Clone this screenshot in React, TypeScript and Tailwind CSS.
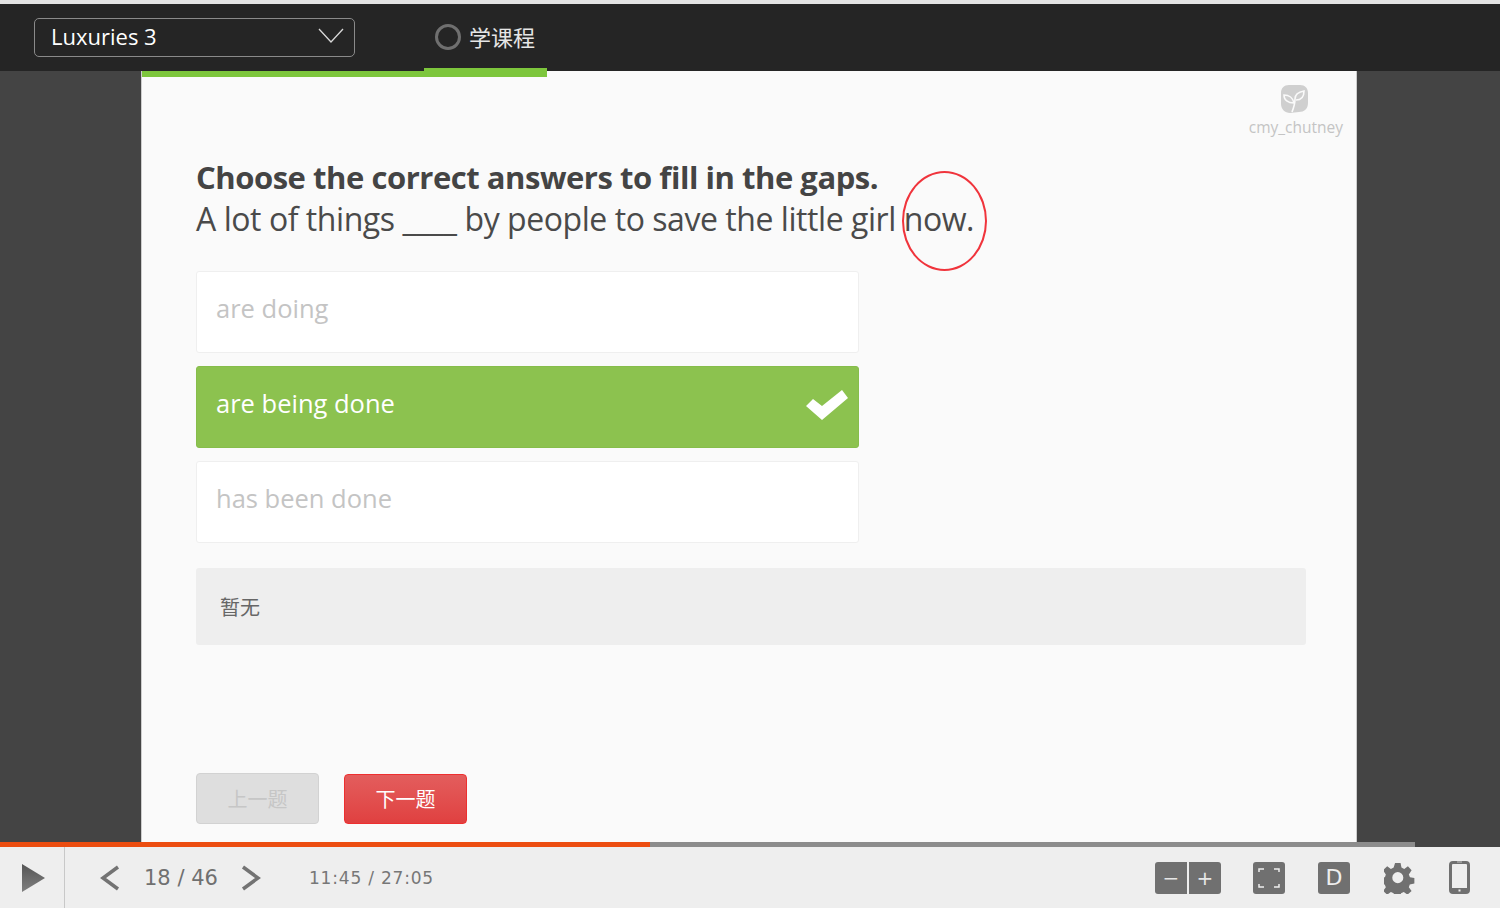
const font = { fontFamily: '"Open Sans", "Noto Sans CJK SC", sans-serif' };
const cjk = { fontFamily: '"Noto Sans CJK SC", sans-serif' };

function Sprout() {
  return (
    <svg width="29" height="29" viewBox="0 0 29 29">
      <path d="M9 1h11c5 0 8 3 8 8v10c0 6-4 9-9 9l-9 1c-5 0-9-4-9-9V9c0-5 3-8 8-8z" fill="#cfcfcf" />
      <path d="M12 28c2-5 3-9 3-13 0-4 3-7 9-8 0 6-3 9-8 9" fill="none" stroke="#fafafa" strokeWidth="1.6" />
      <path d="M14 19c-1-5-5-8-10-8 0 5 4 8 10 8z" fill="none" stroke="#fafafa" strokeWidth="1.6" />
    </svg>
  );
}

function Option({ text, selected }: { text: string; selected?: boolean }) {
  if (selected) {
    return (
      <div className="h-[82px] w-[663px] rounded-[3px] border border-[#86bd4b] bg-[#8cc24f] pl-[19px] pr-[9px] flex items-center justify-between text-white text-[25.5px]">
        <span className="-mt-2">{text}</span>
        <svg width="44" height="32" viewBox="0 0 44 32" className="-mt-[4px]">
          <path d="M1 17l7-7 9 7L37 1l6 8-26 22z" fill="#fff" />
        </svg>
      </div>
    );
  }
  return (
    <div className="h-[82px] w-[663px] rounded-[3px] border border-[#efefef] bg-white pl-[19px] flex items-center text-[25.5px] text-[#c4c4c4]">
      <span className="-mt-2">{text}</span>
    </div>
  );
}

export default function App() {
  return (
    <div className="relative h-[908px] w-[1500px] overflow-hidden bg-[#eeeeee] flex flex-col" style={font}>
      <div className="h-[4px] bg-[#e3e3e3] shrink-0" />

      {/* top bar */}
      <header className="relative h-[67px] shrink-0 bg-[#252525] flex items-center pl-[34px]">
        <div className="h-[39px] w-[321px] rounded-[5px] border border-[#8a8a8a] flex items-center justify-between pl-[16px] pr-[10px] text-white text-[22px]">
          <span className="-mt-[3px]">Luxuries 3</span>
          <svg width="26" height="16" viewBox="0 0 26 16" className="-mt-[4px]">
            <path d="M1 1l12 13L25 1" fill="none" stroke="#d8d8d8" strokeWidth="1.3" />
          </svg>
        </div>
        <div className="ml-[80px] flex items-center gap-[8px] text-[#e6e6e6] text-[22px] -mt-[1px]" style={cjk}>
          <span className="w-[26px] h-[26px] rounded-full border-[3px] border-[#6f6f6f]" />
          <span className="-mt-[2px]">学课程</span>
        </div>
        <div className="absolute left-[424px] top-[64px] h-[3px] w-[123px] bg-[#7dc63c]" />
      </header>

      {/* content */}
      <main className="flex-1 min-h-0 bg-[#444444] pl-[141px] pr-[143px]">
        <div className="relative h-full bg-[#fafafa] border-l border-r border-[#8a8a8a]/40 flex flex-col">
          <div className="h-[6px] w-[405px] bg-[#7dc63c] shrink-0" />

          <div className="absolute right-[13px] top-[13px] flex flex-col items-center gap-[4px] text-[#c4c4c4] text-[15.5px] leading-[20px]">
            <span className="-ml-[3px]"><Sprout /></span>
            <span>cmy_chutney</span>
          </div>

          <div className="pl-[54px] pr-[50px] pt-[80px] flex-1 flex flex-col">
            <h1 className="text-[#444444] text-[31px] leading-[41px] font-bold tracking-[-0.46px]">Choose the correct answers to fill in the gaps.</h1>
            <p className="text-[#4a4a4a] text-[32px] leading-[41px] tracking-[-0.45px]">A lot of things ____ by people to save the little girl now.</p>

            <div className="mt-[32px] flex flex-col gap-[13px]">
              <Option text="are doing" />
              <Option text="are being done" selected />
              <Option text="has been done" />
            </div>

            <div className="mt-[25px] h-[77px] rounded-[3px] bg-[#eeeeee] pl-[24px] flex items-center text-[#666666] text-[20px]" style={cjk}>
              暂无
            </div>

            <div className="mt-[128px] flex items-center gap-[25px] text-[20px]" style={cjk}>
              <button className="h-[51px] w-[123px] rounded-[4px] border border-[#d2d2d2] bg-[#dedede] text-[#c6c6c6]">上一题</button>
              <button className="h-[50px] w-[123px] rounded-[4px] border border-[#ee2f2f] bg-gradient-to-b from-[#e35d5d] to-[#e04040] text-white">下一题</button>
            </div>
          </div>

          {/* annotation */}
          <div className="absolute left-[760px] top-[100px] h-[100px] w-[85px] rounded-[50%] border-2 border-[#f0343c]" />
        </div>
      </main>

      {/* progress */}
      <div className="h-[5px] shrink-0 flex bg-[#444444]">
        <div className="w-[650px] bg-[#ec4d10]" />
        <div className="w-[765px] bg-[#8c8c8c]" />
      </div>

      {/* player controls */}
      <footer className="h-[61px] shrink-0 bg-[#eeeeee] flex items-center text-[#707070]" style={{ fontFamily: '"DejaVu Sans", sans-serif' }}>
        <div className="h-full w-[65px] shrink-0 border-r border-[#c8c8c8] flex items-center pl-[22px]">
          <svg width="23" height="28" viewBox="0 0 23 28">
            <defs>
              <linearGradient id="playFill" x1="0" y1="0" x2="0" y2="1">
                <stop offset="0" stopColor="#555555" />
                <stop offset="1" stopColor="#808080" />
              </linearGradient>
            </defs>
            <path d="M0 0l23 14L0 28z" fill="url(#playFill)" />
          </svg>
        </div>
        <svg width="22" height="26" viewBox="0 0 22 26" className="ml-[34px]"><path d="M19 2L4 13l15 11" fill="none" stroke="#737373" strokeWidth="3.5" /></svg>
        <span className="ml-[23px] mt-[3px] text-[21px] w-[76px]">18 / 46</span>
        <svg width="22" height="26" viewBox="0 0 22 26" className="ml-[20px]"><path d="M3 2l15 11L3 24" fill="none" stroke="#737373" strokeWidth="3.5" /></svg>
        <span className="ml-[47px] mt-[3px] text-[17px] tracking-[0.8px] text-[#777777]">11:45 / 27:05</span>

        <div className="ml-auto flex items-center pr-[30px]">
          <div className="h-[32px] w-[66px] rounded-[3px] bg-[#707070] flex items-center text-[#e6e6e6] text-[20px]">
            <span className="w-[32px] text-center">−</span>
            <span className="h-full w-[2px] bg-[#eeeeee]" />
            <span className="flex-1 text-center">+</span>
          </div>
          <div className="ml-[32px] h-[32px] w-[32px] rounded-[3px] bg-[#707070] flex items-center justify-center">
            <svg width="24" height="22" viewBox="0 0 24 22" fill="none" stroke="#eeeeee" strokeWidth="1.5">
              <path d="M2 5V2h5M17 2h5v3M22 17v3h-5M7 20H2v-3" />
            </svg>
          </div>
          <div className="ml-[33px] h-[32px] w-[32px] rounded-[3px] bg-[#707070] flex items-center justify-center text-[#eeeeee] text-[22px]">D</div>
          <svg width="32" height="32" viewBox="0 0 32 32" className="ml-[34px]">
            <path fillRule="evenodd" fill="#707070" d="M13 0h6l1 5 3 1.500 4-3 4 4.500-3 4.500 1.200 3 4.800 1v6l-5 1-1 3 3 4-4.500 4-4-3-3 1.500-1 5h-6l-1-5-3-1.500-4 3-4.500-4 3-4-1.200-3-4.800-1v-6l5-1 1-3-3-4.500 4.500-4.500 4 3 3-1.500zM16 10a6 6 0 1 0 0 12 6 6 0 0 0 0-12z" transform="scale(0.92) translate(-1 1)" />
          </svg>
          <svg width="21" height="33" viewBox="0 0 21 33" className="ml-[33px]">
            <rect x="1.500" y="1.500" width="18" height="30" rx="2.500" fill="none" stroke="#707070" strokeWidth="3" />
            <rect x="1" y="27" width="19" height="5" fill="#707070" />
            <rect x="8" y="0" width="5" height="2" fill="#9a9a9a" />
            <rect x="9.500" y="28.500" width="2" height="2" fill="#eeeeee" />
          </svg>
        </div>
      </footer>
    </div>
  );
}
